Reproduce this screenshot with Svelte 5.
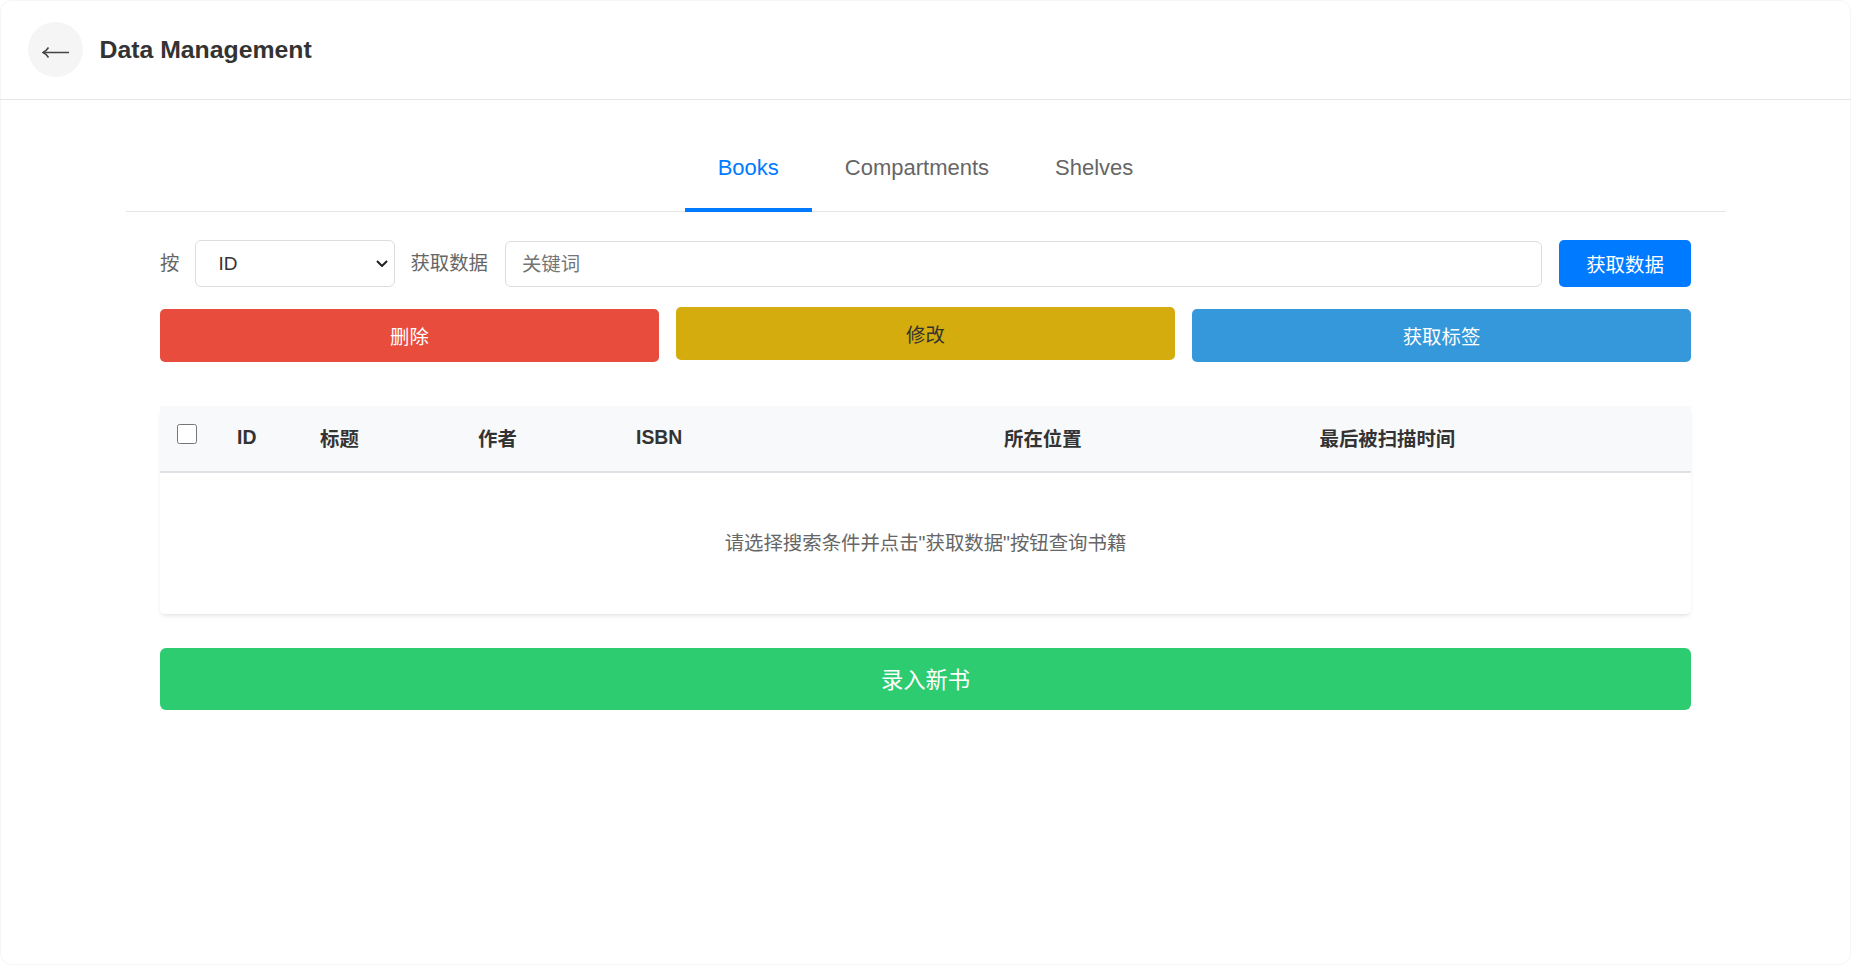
<script>
  const tabs = ["Books", "Compartments", "Shelves"];
  const columns = ["ID", "标题", "作者", "ISBN", "所在位置", "最后被扫描时间"];

  let activeTab = $state("Books");
  let field = $state("id");
  let keyword = $state("");
</script>

<div class="page">
  <header class="topbar">
    <button class="back" aria-label="back">
      <svg width="27" height="13" viewBox="0 0 27 13" fill="none" stroke="#444" stroke-width="1.5">
        <path d="M1 6.5H27" />
        <path d="M6.5 1.5C5 3.8 3.2 5.5 1 6.5C3.2 7.5 5 9.2 6.5 11.5" />
      </svg>
    </button>
    <h1>Data Management</h1>
  </header>

  <main class="content">
    <nav class="tabs">
      {#each tabs as tab}
        <button class="tab" class:active={activeTab === tab} onclick={() => (activeTab = tab)}>{tab}</button>
      {/each}
    </nav>

    <div class="panel">
      <div class="search">
        <span class="label">按</span>
        <select bind:value={field}>
          <option value="id">ID</option>
          <option value="title">标题</option>
          <option value="author">作者</option>
        </select>
        <span class="label">获取数据</span>
        <input type="text" placeholder="关键词" bind:value={keyword} />
        <button class="fetch">获取数据</button>
      </div>

      <div class="actions">
        <button class="action red">删除</button>
        <button class="action yellow">修改</button>
        <button class="action blue">获取标签</button>
      </div>

      <div class="table-wrap">
        <table>
          <colgroup>
            <col style="width: 60.5px" />
            <col style="width: 83px" />
            <col style="width: 158px" />
            <col style="width: 158px" />
            <col style="width: 368px" />
            <col style="width: 315.5px" />
            <col />
          </colgroup>
          <thead>
            <tr>
              <th><input class="check" type="checkbox" /></th>
              {#each columns as col}
                <th>{col}</th>
              {/each}
            </tr>
          </thead>
        </table>
        <p class="empty">请选择搜索条件并点击"获取数据"按钮查询书籍</p>
      </div>

      <button class="add">录入新书</button>
    </div>
  </main>
</div>

<style>
  :global(body) {
    margin: 0;
    background: #fff;
  }

  .page {
    height: 965px;
    box-sizing: border-box;
    background: #fff;
    border-radius: 12px;
    box-shadow: inset 0 0 0 1px #f6f6f6;
    font-family: "Liberation Sans", "Noto Sans CJK SC", sans-serif;
    font-size: 19.4px;
    color: #333;
    overflow: hidden;
  }

  button {
    font-family: inherit;
    cursor: pointer;
  }

  .topbar {
    display: flex;
    align-items: center;
    gap: 16.5px;
    height: 100px;
    box-sizing: border-box;
    padding: 0 28px;
    border-bottom: 1px solid #e5e5e5;
  }

  .back {
    display: flex;
    align-items: center;
    justify-content: center;
    width: 55px;
    height: 55px;
    padding: 5px 0 0;
    border: none;
    border-radius: 50%;
    background: #f5f5f5;
  }

  h1 {
    margin: 0;
    font-size: 24.8px;
    font-weight: 700;
    color: #333;
  }

  .content {
    width: 1600px;
    margin: 0 auto;
  }

  .tabs {
    display: flex;
    justify-content: center;
    padding-top: 27px;
    border-bottom: 1px solid #e5e5e5;
  }

  .tab {
    height: 85px;
    padding: 0 33px;
    border: none;
    border-bottom: 4px solid transparent;
    margin-bottom: -1px;
    background: none;
    color: #666;
    font-size: 22px;
  }

  .tab.active {
    color: #007bff;
    border-bottom-color: #007bff;
  }

  .panel {
    padding: 0 34.5px;
  }

  .search {
    display: flex;
    align-items: center;
    gap: 16px;
    margin-top: 28px;
  }

  .label {
    padding-bottom: 4px;
    color: #666;
  }

  select {
    appearance: none;
    width: 200px;
    height: 47px;
    margin-right: -1px;
    padding: 0 12px 0 22px;
    border: 1px solid #ddd;
    border-radius: 6px;
    background: #fff url("data:image/svg+xml,%3Csvg xmlns='http://www.w3.org/2000/svg' width='12' height='7' fill='none' stroke='%23222' stroke-width='2'%3E%3Cpath d='M1 1l5 5 5-5'/%3E%3C/svg%3E") no-repeat right 6px center;
    color: #333;
    font-family: inherit;
    font-size: 19px;
  }

  input[type="text"] {
    flex: 1;
    align-self: flex-end;
    min-width: 0;
    height: 46px;
    box-sizing: border-box;
    margin-left: 1px;
    padding: 0 16px;
    border: 1px solid #ddd;
    border-radius: 6px;
    color: #333;
    font-family: inherit;
    font-size: 19.4px;
  }

  input[type="text"]::placeholder {
    color: #757575;
  }

  .fetch {
    width: 132px;
    height: 47px;
    margin-left: 1px;
    border: none;
    border-radius: 5px;
    background: #007bff;
    color: #fff;
    font-size: 19.4px;
  }

  .actions {
    display: flex;
    gap: 17px;
    margin-top: 22px;
  }

  .action {
    flex: 1;
    height: 53px;
    border: none;
    border-radius: 5px;
    color: #fff;
    font-size: 19.4px;
  }

  .red {
    background: #e74c3c;
  }

  .yellow {
    background: #d4ac0d;
    color: #333;
    transform: translateY(-2px);
  }

  .blue {
    background: #3498db;
  }

  .table-wrap {
    margin-top: 44px;
    border-radius: 5px;
    box-shadow: 0 3px 5px -2px rgba(0, 0, 0, 0.15);
  }

  table {
    width: 100%;
    table-layout: fixed;
    border-collapse: collapse;
  }

  th {
    height: 62px;
    padding: 0 16.5px 3px;
    background: #f8f9fa;
    border-bottom: 2px solid #dee2e6;
    color: #333;
    font-size: 19.4px;
    font-weight: 700;
    text-align: left;
    white-space: nowrap;
  }

  .check {
    display: block;
    width: 20px;
    height: 20px;
    margin: -7px 0 0;
  }

  .empty {
    margin: 0;
    padding: 48px 0;
    color: #666;
    line-height: 45px;
    text-align: center;
  }

  .add {
    display: block;
    width: 100%;
    height: 62px;
    padding: 0 0 2px;
    margin-top: 34px;
    border: none;
    border-radius: 6px;
    background: #2ecc71;
    color: #fff;
    font-size: 22.3px;
  }
</style>
